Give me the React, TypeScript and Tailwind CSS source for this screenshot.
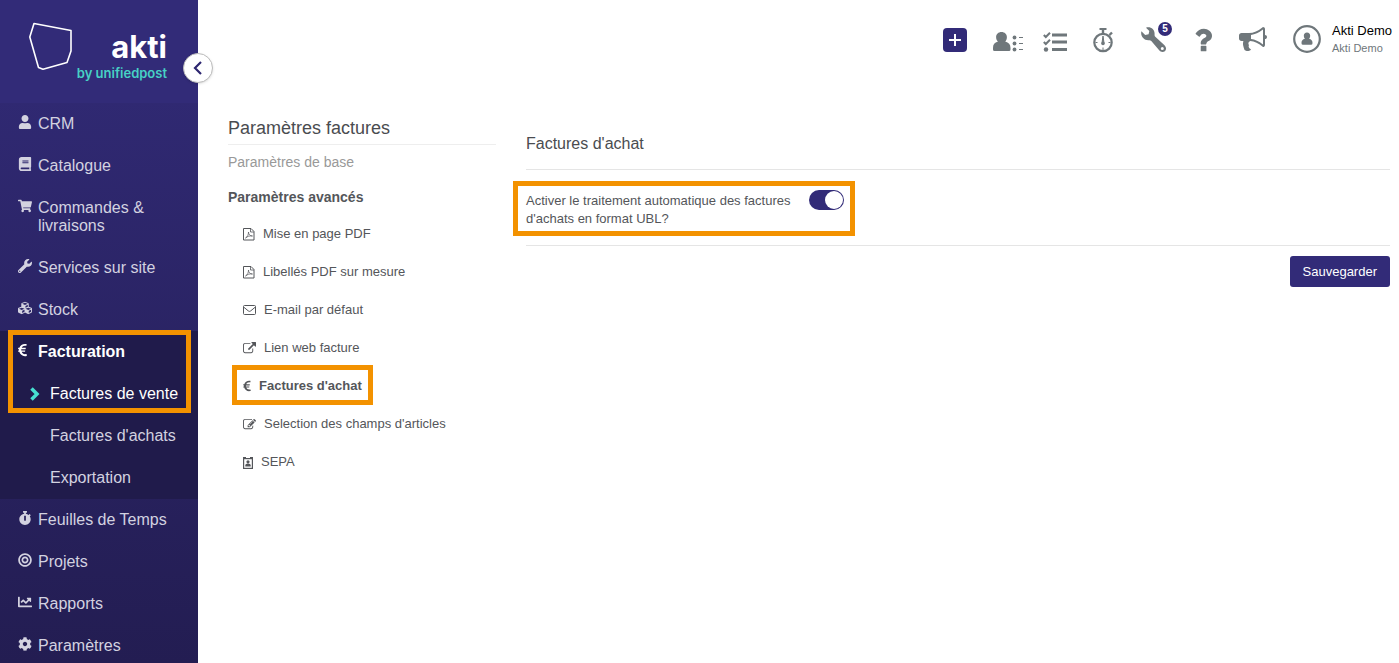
import React from "react";
import clsx from "clsx";
import { FaBook, FaBullseye, FaChartLine, FaCog, FaCubes, FaEuroSign, FaShoppingCart, FaStopwatch, FaUser, FaWrench } from "react-icons/fa";

type IconProps = { className?: string };

function Glyph({ d, className, viewBox = "0 0 1792 1792" }: IconProps & { d: string; viewBox?: string }) {
  return (
    <svg viewBox={viewBox} className={className} fill="currentColor" aria-hidden="true">
      <path d={d} />
    </svg>
  );
}

const glyphs = {
  link: "M1408 928v320q0 119-84.5 203.5t-203.5 84.5h-832q-119 0-203.5-84.5t-84.5-203.5v-832q0-119 84.5-203.5t203.5-84.5h704q14 0 23 9t9 23v64q0 14-9 23t-23 9h-704q-66 0-113 47t-47 113v832q0 66 47 113t113 47h832q66 0 113-47t47-113v-320q0-14 9-23t23-9h64q14 0 23 9t9 23zm384-864v512q0 26-19 45t-45 19-45-19l-176-176-652 652q-10 10-23 10t-23-10l-114-114q-10-10-10-23t10-23l652-652-176-176q-19-19-19-45t19-45 45-19h512q26 0 45 19t19 45z",
  edit: "M888 1184l116-116-152-152-116 116v56h96v96h56zm440-720q-16-16-33 1l-350 350q-17 17-1 33t33-1l350-350q17-17 1-33zm80 594v190q0 119-84.5 203.5t-203.5 84.5h-832q-119 0-203.5-84.5t-84.5-203.5v-832q0-119 84.5-203.5t203.5-84.5h832q63 0 117 25 15 7 18 23 3 17-9 29l-49 49q-14 14-32 8-23-6-45-6h-832q-66 0-113 47t-47 113v832q0 66 47 113t113 47h832q66 0 113-47t47-113v-126q0-13 9-22l64-64q15-15 35-7t20 29zm-96-738l288 288-672 672h-288v-288zm444 132l-92 92-288-288 92-92q28-28 68-28t68 28l152 152q28 28 28 68t-28 68z",
  bullhorn: "M1664 640q53 0 90.5 37.5t37.5 90.5-37.5 90.5-90.5 37.5v384q0 52-38 90t-90 38q-417-347-812-380-58 19-91 66t-31 100.5 40 92.5q-20 33-23 65.5t6 58 33.5 55 48 50 61.5 50.5q-29 58-111.5 83t-168.5 11.5-132-55.5q-7-23-29.5-87.5t-32-94.5-23-89-15-101 3.5-98.5 22-110.5h-122q-66 0-113-47t-47-113v-192q0-66 47-113t113-47h480q435 0 896-384 52 0 90 38t38 90v384zm-128 604v-954q-394 302-768 343v270q377 42 768 341z",
  question: "M1088 1256v240q0 16-12 28t-28 12h-240q-16 0-28-12t-12-28v-240q0-16 12-28t28-12h240q16 0 28 12t12 28zm316-600q0 54-15.5 101t-35 76.5-55 59.5-57.5 43.5-61 35.5q-41 23-68.5 65t-27.5 67q0 17-12 32.5t-28 15.5h-240q-15 0-25.5-18.5t-10.5-37.5v-45q0-83 65-156.5t143-108.5q59-27 84-56t25-76q0-42-46.5-74t-107.5-32q-65 0-108 29-35 25-107 115-13 16-31 16-12 0-25-8l-164-125q-13-10-15.5-25t5.5-28q160-266 464-266 80 0 161 31t146 83 106 127.5 41 158.5z",
};

function PdfIcon() {
  return (
    <svg viewBox="0 0 12 14" className="h-3.5 w-3" fill="none" stroke="currentColor" aria-hidden="true">
      <path d="M.5 1.500h7.500l3 3v8.500h-10.500z" />
      <path d="M7.500 1.500v3.500h3.500" strokeWidth=".8" />
      <path d="M2.500 11c2-1 3-3.500 3-6 0 2.500 1.500 4 4 4-3-.4-5 .4-7 2z" strokeWidth=".7" />
    </svg>
  );
}

function EnvelopeIcon() {
  return (
    <svg viewBox="0 0 13 12" className="h-3 w-[13px]" fill="none" stroke="currentColor" aria-hidden="true">
      <rect x=".5" y="1.500" width="12" height="9" rx="1" />
      <path d="M.8 3.200l4.500 3.700q1.200 1 2.400 0l4.500-3.700" />
    </svg>
  );
}

function BadgeIcon() {
  return (
    <svg viewBox="0 0 10 13" className="h-[13px] w-2.5" aria-hidden="true">
      <path d="M0 1h3v1h4v-1h3v12h-10z" fill="currentColor" />
      <path d="M1.200 3.200h7.600v8.600h-7.600z" fill="#fff" />
      <circle cx="5" cy="5.800" r="1.600" fill="currentColor" />
      <path d="M2.300 10.500v-1.500q0-1.500 2.700-1.500t2.700 1.500v1.500z" fill="currentColor" />
    </svg>
  );
}

function EuroIcon() {
  return <FaEuroSign className="h-3 w-2" />;
}

function ContactsIcon() {
  return (
    <svg viewBox="0 0 30 20" className="h-5 w-[30px]" fill="currentColor" aria-hidden="true">
      <path d="M8.500 0c3.200 0 5.400 2.200 5.400 5 0 2-.7 3.500-1.700 4.600 3.500 1 5.300 3 5.300 6.400v1.500q0 1.500-1.500 1.500h-14.500q-1.500 0-1.500-1.500v-1.500c0-3.400 1.500-5.400 5-6.400-1.200-1.100-1.900-2.600-1.900-4.600 0-2.800 2.200-5 5.400-5z" />
      <circle cx="21.500" cy="5.500" r="1.900" />
      <circle cx="21.500" cy="11.500" r="1.900" />
      <circle cx="21.500" cy="17.500" r="1.900" />
      <path d="M26 5h4v1h-4zM26 11h4v1h-4zM26 17h4v1h-4z" />
    </svg>
  );
}

function TasksIcon() {
  return (
    <svg viewBox="0 0 24 20" className="h-5 w-6" fill="none" stroke="currentColor" aria-hidden="true">
      <path d="M9 3h15M9 10h15M9 17.500h15" strokeWidth="3" />
      <path d="M.8 3l2 2 4.200-4.300M.8 10l2 2 4.200-4.300" strokeWidth="2" />
      <circle cx="3" cy="17.500" r="2.200" fill="currentColor" stroke="none" />
    </svg>
  );
}

function TimerIcon() {
  return (
    <svg viewBox="0 0 22 26" className="h-[26px] w-[22px]" fill="none" stroke="currentColor" aria-hidden="true">
      <circle cx="11" cy="15.500" r="8.700" strokeWidth="2.200" />
      <path d="M11 1.500v5.500M17.500 8l2.500-2.500" strokeWidth="2.400" />
      <path d="M7.500 2h7" strokeWidth="2" />
      <path d="M11 9l1 7h-2z" fill="currentColor" strokeWidth="1" />
      <circle cx="11" cy="16.500" r="1.800" fill="currentColor" stroke="none" />
      <path d="M11 20.500v2.500M3.500 15.500h2M16.500 15.500h2" strokeWidth="1" />
    </svg>
  );
}

function ToolsIcon() {
  return (
    <svg viewBox="0 0 25 25" className="size-[25px]" fill="currentColor" fillRule="evenodd" aria-hidden="true">
      <path d="M.4 4.200L4.200 8l3.400-.7.700-3.300L5 .7C9.500-.7 13.600 2.300 13.600 6.800c0 1.300-.2 2.200.7 3l9.200 8.400c3 3 1.200 6.800-2 6.800-1.400 0-2.400-.6-3.300-1.700L10.300 14c-.8-.9-1.700-.7-3-.7C2.600 13.300-.8 8.800.4 4.200zM21.300 20a1.500 1.500 0 1 0 0 3 1.500 1.500 0 1 0 0-3z" />
    </svg>
  );
}

function AvatarIcon() {
  return (
    <svg viewBox="0 0 28 28" className="size-7" fill="currentColor" aria-hidden="true">
      <circle cx="14" cy="14" r="12.800" fill="none" stroke="currentColor" strokeWidth="2.200" />
      <path d="M14 7.500c2 0 3.200 1.400 3.200 3.200 0 1.300-.4 2.300-1.100 3 2.200.6 3.400 1.800 3.400 4v.6q0 1.500-1.500 1.500h-8q-1.500 0-1.500-1.500v-.6c0-2.200 1.200-3.400 3.400-4-.7-.7-1.100-1.700-1.100-3 0-1.800 1.200-3.200 3.200-3.200z" />
    </svg>
  );
}

function Logo() {
  return (
    <div className="flex h-[103px] shrink-0 items-start bg-[#322b78] pt-[22px] pl-7">
      <svg viewBox="0 0 46 50" className="h-[50px] w-[46px] shrink-0" fill="none" stroke="#fff" strokeWidth="1.600" strokeLinejoin="round" aria-hidden="true">
        <path d="M6 1.500L43 8.500V29L39 40.500 15 47.200 10.500 45.500 1.800 15z" />
      </svg>
      <div className="-ml-1 flex w-[97px] flex-col items-end pt-[7px] font-[Inter,sans-serif]">
        <span className="text-[31px] leading-9 font-bold text-white">akti</span>
        <span className="text-[13px] leading-4 font-semibold whitespace-nowrap text-[#47d1c5]">by unifiedpost</span>
      </div>
    </div>
  );
}

function NavItem({ icon: Icon, label }: { icon: React.ComponentType<IconProps>; label: string }) {
  return (
    <li>
      <a href="#" className="flex gap-1 py-3 pr-5 pl-[18px] text-[#d3d2e0]">
        <span className="w-4 shrink-0"><Icon className="h-3.5 w-auto" /></span>
        <span>{label}</span>
      </a>
    </li>
  );
}

function Sidebar() {
  return (
    <aside className="relative w-[198px] shrink-0">
      <div className="flex h-screen flex-col overflow-hidden bg-linear-to-b from-[#322b78] to-[#231d52]">
        <Logo />
        <nav aria-label="Menu principal">
          <ul className="text-base leading-[18px]">
            <NavItem icon={FaUser} label="CRM" />
            <NavItem icon={FaBook} label="Catalogue" />
            <NavItem icon={FaShoppingCart} label="Commandes & livraisons" />
            <NavItem icon={FaWrench} label="Services sur site" />
            <NavItem icon={FaCubes} label="Stock" />
            <li className="relative bg-[#201b4b]">
              <a href="#" className="flex gap-1 py-3 pl-[18px] font-bold text-white">
                <span className="w-4 shrink-0"><FaEuroSign className="h-3.5 w-[9px]" /></span>
                <span>Facturation</span>
              </a>
              <ul>
                {["Factures de vente", "Factures d'achats", "Exportation"].map((label, i) => (
                  <li key={label}>
                    <a href="#" className={clsx("flex py-3 pl-[30px]", i === 0 ? "text-white" : "text-[#d3d2e0]")}>
                      <span className="flex w-5 shrink-0 items-center">
                        {i === 0 && (
                          <svg viewBox="0 0 10 14" className="h-3.5 w-2.5" fill="none" stroke="#47dfd0" strokeWidth="3.500" aria-hidden="true">
                            <path d="M1.500 1.500L7 7l-5.500 5.500" />
                          </svg>
                        )}
                      </span>
                      <span className="whitespace-nowrap">{label}</span>
                    </a>
                  </li>
                ))}
              </ul>
              <div className="pointer-events-none absolute -top-px right-[7px] left-2 h-[83px] border-5 border-[#f39200]" />
            </li>
            <NavItem icon={FaStopwatch} label="Feuilles de Temps" />
            <NavItem icon={FaBullseye} label="Projets" />
            <NavItem icon={FaChartLine} label="Rapports" />
            <NavItem icon={FaCog} label="Paramètres" />
          </ul>
        </nav>
      </div>
      <button aria-label="Réduire le menu" className="absolute top-[53px] -right-[15px] flex size-[30px] items-center justify-center rounded-full border border-[#bbb] bg-white shadow">
        <svg viewBox="0 0 10 14" className="h-3.5 w-2.5" fill="none" stroke="#2d2670" strokeWidth="2.200" aria-hidden="true">
          <path d="M8 1L2 7l6 6" />
        </svg>
      </button>
    </aside>
  );
}

function ToolButton({ label, className, children }: { label: string; className?: string; children: React.ReactNode }) {
  return (
    <button aria-label={label} className={clsx("relative flex h-10 w-[50px] items-center justify-center", className)}>
      {children}
    </button>
  );
}

function Topbar() {
  return (
    <header className="flex h-20 items-center justify-end pr-[7px] text-[#6f777b]">
      <ToolButton label="Ajouter" className="pl-1">
        <span className="flex size-6 items-center justify-center rounded-sm bg-[#322b78]">
          <svg viewBox="0 0 12 12" className="size-3" stroke="#fff" strokeWidth="2" aria-hidden="true">
            <path d="M6 0v12M0 6h12" />
          </svg>
        </span>
      </ToolButton>
      <ToolButton label="Contacts" className="pt-1 pl-2.5"><ContactsIcon /></ToolButton>
      <ToolButton label="Tâches" className="pt-1 pl-1"><TasksIcon /></ToolButton>
      <ToolButton label="Chronomètre"><TimerIcon /></ToolButton>
      <ToolButton label="Outils" className="pb-0.5">
        <ToolsIcon />
        <span className="absolute top-0.5 right-1.5 flex size-3.5 items-center justify-center rounded-full bg-[#322b78] text-[10px] leading-none font-bold text-white">5</span>
      </ToolButton>
      <ToolButton label="Aide"><Glyph d={glyphs.question} viewBox="388 256 1016 1280" className="h-6 w-[18px]" /></ToolButton>
      <ToolButton label="Annonces" className="pb-0.5"><Glyph d={glyphs.bullhorn} className="size-7" /></ToolButton>
      <button className="ml-[15px] flex items-center gap-[11px] pb-0.5 text-left">
        <AvatarIcon />
        <span className="flex flex-col whitespace-nowrap">
          <span className="text-[13px] leading-[18px] text-black">Akti Demo</span>
          <span className="text-[11px] leading-4">Akti Demo</span>
        </span>
      </button>
    </header>
  );
}

const settings = [
  { label: "Mise en page PDF", icon: <PdfIcon /> },
  { label: "Libellés PDF sur mesure", icon: <PdfIcon /> },
  { label: "E-mail par défaut", icon: <EnvelopeIcon /> },
  { label: "Lien web facture", icon: <Glyph d={glyphs.link} className="size-[13px]" /> },
  { label: "Factures d'achat", icon: <EuroIcon />, active: true },
  { label: "Selection des champs d'articles", icon: <Glyph d={glyphs.edit} className="size-[13px]" /> },
  { label: "SEPA", icon: <BadgeIcon /> },
];

function SettingsMenu() {
  return (
    <nav aria-label="Paramètres factures" className="w-[268px] shrink-0 pt-9 text-[#54565a]">
      <h1 className="border-b border-[#eee] pb-1 text-lg leading-6 text-[#4a4c50]">Paramètres factures</h1>
      <a href="#" className="mt-[7px] block text-sm leading-5 text-[#999]">Paramètres de base</a>
      <h2 className="mt-[15px] text-sm leading-5 font-bold">Paramètres avancés</h2>
      <ul className="mt-2 pl-[15px] text-[13px]">
        {settings.map(({ label, icon, active }) => (
          <li key={label}>
            <a href="#" className={clsx("relative inline-flex h-[38px] items-center gap-2 align-top", active && "font-bold")}>
              {icon}
              {label}
              {active && <span className="pointer-events-none absolute -inset-x-[11px] -top-0.5 bottom-0 border-5 border-[#f39200]" />}
            </a>
          </li>
        ))}
      </ul>
    </nav>
  );
}

function PurchaseInvoices() {
  const [enabled, setEnabled] = React.useState(true);

  return (
    <form className="min-w-0 flex-1 pt-[52px] text-[#54565a]" onSubmit={(e) => e.preventDefault()}>
      <h2 className="border-b border-[#e5e5e5] pb-[13px] text-base leading-6 text-[#4a4c50]">Factures d'achat</h2>
      <div className="border-b border-[#e5e5e5] pt-5 pb-[17px]">
        <label className="relative flex w-[318px] items-start justify-between text-[13px] leading-[18px]">
          <span className="w-[270px] pt-0.5">Activer le traitement automatique des factures d'achats en format UBL?</span>
          <input type="checkbox" checked={enabled} onChange={(e) => setEnabled(e.target.checked)} className="peer sr-only" />
          <span className="flex h-5 w-[35px] shrink-0 items-center justify-start rounded-full bg-gray-400 p-px peer-checked:justify-end peer-checked:bg-[#322b78]">
            <span className="size-[18px] rounded-full bg-white" />
          </span>
          <span className="pointer-events-none absolute -top-[9px] -right-[11px] -bottom-2 -left-[13px] border-5 border-[#f39200]" />
        </label>
      </div>
      <div className="mt-2.5 flex justify-end">
        <button type="submit" className="h-[31px] rounded-[3px] bg-[#322b78] px-[13px] text-[13px] text-white">Sauvegarder</button>
      </div>
    </form>
  );
}

export default function App() {
  return (
    <div className="flex min-h-screen bg-white font-['Liberation_Sans',Arial,sans-serif]">
      <Sidebar />
      <div className="min-w-0 flex-1">
        <Topbar />
        <main className="flex gap-[30px] pr-[9px] pl-[30px]">
          <SettingsMenu />
          <PurchaseInvoices />
        </main>
      </div>
    </div>
  );
}
